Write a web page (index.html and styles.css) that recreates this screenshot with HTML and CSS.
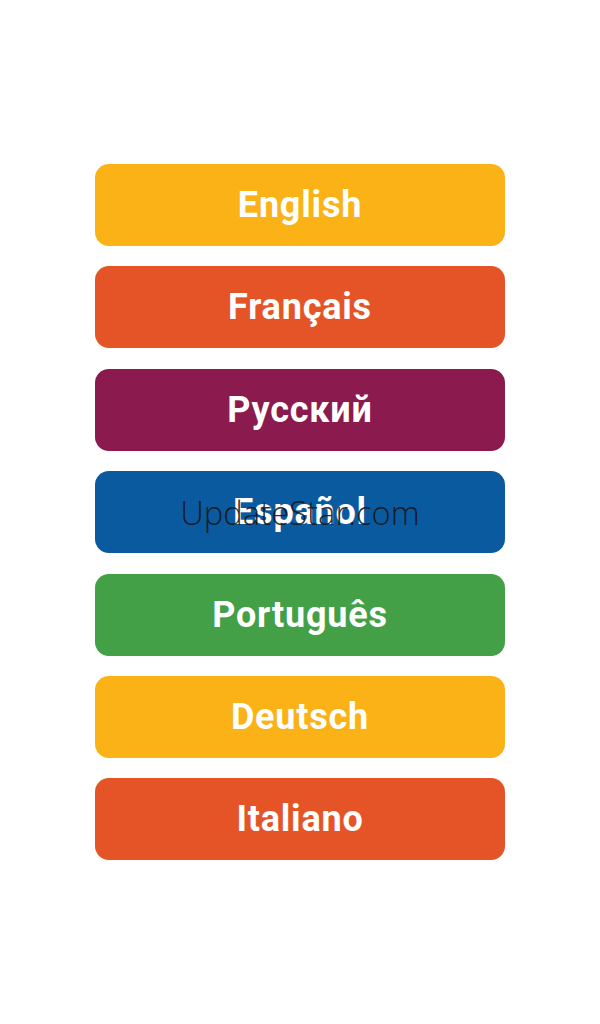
FILE: index.html
```html
<!DOCTYPE html>
<html>
<head>
<meta charset="utf-8">
<link rel="stylesheet" href="styles.css">
</head>
<body>
<main class="screen">
  <div class="list">
    <div class="lang yellow">English</div>
    <div class="lang orange">Français</div>
    <div class="lang purple">Русский</div>
    <div class="lang blue">Español</div>
    <div class="lang green">Português</div>
    <div class="lang yellow">Deutsch</div>
    <div class="lang orange">Italiano</div>
  </div>
  <div class="watermark">UpdateStar.com</div>
</main>
</body>
</html>
```
FILE: styles.css
```css
html, body {
  margin: 0;
  padding: 0;
  background: #ffffff;
}
.screen {
  position: relative;
  width: 600px;
  height: 1024px;
  box-sizing: border-box;
  padding-top: 164px;
}
.list {
  display: flex;
  flex-direction: column;
  gap: 20.4px;
  margin: 0 95px;
}
.lang {
  height: 82px;
  border-radius: 14px;
  display: flex;
  align-items: center;
  justify-content: center;
  color: #ffffff;
  font-family: Roboto, "Liberation Sans", sans-serif;
  font-weight: 700;
  font-size: 36px;
  letter-spacing: 0.8px;
}
.yellow { background: #fbb217; }
.orange { background: #e55427; }
.purple { background: #8b1a4e; }
.blue { background: #0a5a9f; }
.green { background: #43a047; }
.watermark {
  position: absolute;
  left: 0;
  right: 0;
  top: 491px;
  text-align: center;
  font-family: "Open Sans", "Noto Sans", sans-serif;
  font-weight: 350;
  font-size: 32.8px;
  color: rgba(20, 20, 20, 0.9);
  line-height: 44px;
}
```
